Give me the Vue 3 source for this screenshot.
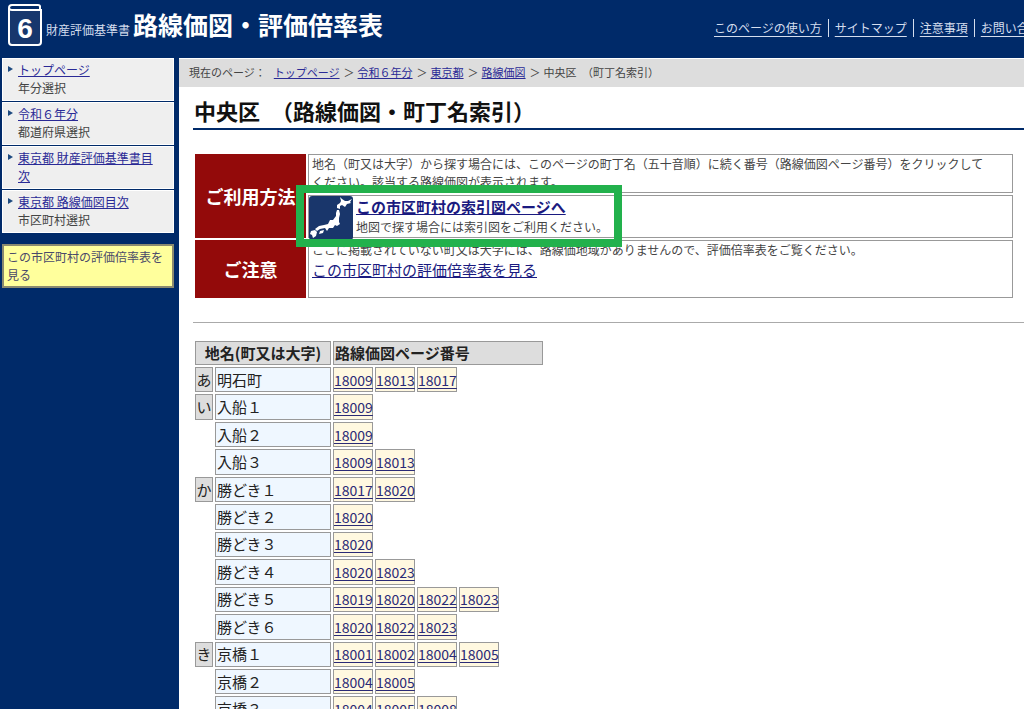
<script setup>
const help = ['このページの使い方', 'サイトマップ', '注意事項', 'お問い合わせ先']
const menu = [
  { link: 'トップページ', note: '年分選択' },
  { link: '令和６年分', note: '都道府県選択' },
  { link: '東京都 財産評価基準書目次', note: '' },
  { link: '東京都 路線価図目次', note: '市区町村選択' },
]
const crumbs = ['トップページ', '令和６年分', '東京都', '路線価図']
const towns = [
  { kana: 'あ', name: '明石町', pages: ['18009', '18013', '18017'] },
  { kana: 'い', name: '入船１', pages: ['18009'] },
  { kana: '', name: '入船２', pages: ['18009'] },
  { kana: '', name: '入船３', pages: ['18009', '18013'] },
  { kana: 'か', name: '勝どき１', pages: ['18017', '18020'] },
  { kana: '', name: '勝どき２', pages: ['18020'] },
  { kana: '', name: '勝どき３', pages: ['18020'] },
  { kana: '', name: '勝どき４', pages: ['18020', '18023'] },
  { kana: '', name: '勝どき５', pages: ['18019', '18020', '18022', '18023'] },
  { kana: '', name: '勝どき６', pages: ['18020', '18022', '18023'] },
  { kana: 'き', name: '京橋１', pages: ['18001', '18002', '18004', '18005'] },
  { kana: '', name: '京橋２', pages: ['18004', '18005'] },
  { kana: '', name: '京橋３', pages: ['18004', '18005', '18008'] },
]
</script>

<template>
  <div class="page">
    <header class="top">
      <svg class="book" viewBox="0 0 34 42" aria-hidden="true">
        <rect x="2" y="6" width="30" height="34" fill="#17376d" />
        <path d="M32 5.500V2.500Q32 1 30 1H4Q1 1 1 4V38Q1 41 4 41H30Q33 41 33 38V6H4Q1.500 6 1 4" fill="none" stroke="#fff" stroke-width="2" />
        <text x="17" y="34" text-anchor="middle" class="era">6</text>
      </svg>
      <p class="brand"><span class="series">財産評価基準書</span><strong class="title">路線価図・評価倍率表</strong></p>
      <nav class="help">
        <a v-for="h in help" :key="h" href="#">{{ h }}</a>
      </nav>
    </header>

    <div class="body">
      <aside class="side">
        <ul class="menu">
          <li v-for="m in menu" :key="m.link">
            <a href="#">{{ m.link }}</a>
            <span v-if="m.note">{{ m.note }}</span>
          </li>
        </ul>
        <a class="ratio" href="#">この市区町村の評価倍率表を見る</a>
      </aside>

      <main class="main">
        <div class="crumbs">
          <span class="label">現在のページ：</span>
          <template v-for="c in crumbs" :key="c"><a href="#">{{ c }}</a><span class="sep">＞</span></template>
          <span>中央区　（町丁名索引）</span>
        </div>

        <div class="content">
          <h1>中央区　（路線価図・町丁名索引）</h1>

          <div class="guide">
            <table class="notes">
              <tbody>
                <tr class="first">
                  <th rowspan="2" scope="rowgroup">ご利用方法</th>
                  <td>地名（町又は大字）から探す場合には、このページの町丁名（五十音順）に続く番号（路線価図ページ番号）をクリックして<br>ください。該当する路線価図が表示されます。</td>
                </tr>
                <tr class="second">
                  <td class="index">
                    <div class="map-row">
                      <svg class="map" viewBox="0 0 44 44" aria-hidden="true">
                        <rect width="44" height="44" rx="3" fill="#19366b" />
                        <path d="M31 1L33 3L36 5L39 5L43 3L41 6L42 7L38 8L36 11L33 9L31 10L31 13L28 12L28 9L31 7L32 5Z" fill="#fff" />
                        <path d="M28 14L30 14L31 18L30 22L30 26L31 28L28 30L26 29L24 32L20 32L18 35L16 32L11 33L8 35L6 33L10 30L15 29L19 28L21 24L24 24L27 20L27 17Z" fill="#fff" />
                        <path d="M11 35L15 34L14 37L10 38ZM2 35L6 34L8 36L7 40L4 42L3 39L1 38Z" fill="#fff" />
                      </svg>
                      <div>
                        <a class="strong" href="#">この市区町村の索引図ページへ</a>
                        <p>地図で探す場合には索引図をご利用ください。</p>
                      </div>
                    </div>
                  </td>
                </tr>
                <tr class="third">
                  <th scope="row">ご注意</th>
                  <td>
                    <p>ここに掲載されていない町又は大字には、路線価地域がありませんので、評価倍率表をご覧ください。</p>
                    <a class="see" href="#">この市区町村の評価倍率表を見る</a>
                  </td>
                </tr>
              </tbody>
            </table>
            <div class="marker"></div>
          </div>

          <hr>

          <table class="towns">
            <colgroup>
              <col class="c-kana"><col class="c-name"><col class="c-page"><col class="c-page"><col class="c-page"><col class="c-page"><col class="c-rest">
            </colgroup>
            <thead>
              <tr>
                <th colspan="2" scope="col" class="place">地名(町又は大字)</th>
                <th colspan="5" scope="col">路線価図ページ番号</th>
              </tr>
            </thead>
            <tbody>
              <tr v-for="t in towns" :key="t.name">
                <td :class="{ kana: t.kana }">{{ t.kana }}</td>
                <td class="name">{{ t.name }}</td>
                <td v-for="p in t.pages" :key="p" class="num"><a href="#">{{ p }}</a></td>
              </tr>
            </tbody>
          </table>
        </div>
      </main>
    </div>
  </div>
</template>

<style>
html { scrollbar-width: none; }
body { margin: 0; background: #002a69; }
</style>

<style scoped>
.page {
  min-height: 100vh;
  display: flex;
  flex-direction: column;
  font-family: "Noto Sans CJK JP", sans-serif;
  font-size: 12px;
  line-height: 18px;
  color: #444;
  background: #002a69;
}
p, ul, h1 { margin: 0; padding: 0; }
a { color: #2a2a96; }

.top {
  height: 58px;
  display: flex;
  align-items: flex-start;
  overflow: hidden;
  white-space: nowrap;
  color: #fff;
}
.book { width: 34px; height: 42px; margin: 4px 4px 0 8px; flex: none; }
.era { font: bold 28px "Liberation Sans", sans-serif; fill: #fff; }
.brand { display: flex; align-items: baseline; line-height: 36px; padding-top: 6px; flex: none; }
.series { color: #d5deee; margin-right: 3px; }
.title { font-size: 25px; }
.help { display: flex; margin-left: auto; width: 316px; padding-top: 19px; flex: none; }
.help a { color: #d5deee; padding: 0 6px; border-left: 1px solid #d5deee; flex: none; text-underline-offset: 3px; }
.help a:first-child { border-left: 0; }

.body { flex: 1; display: flex; }
.side { width: 172px; padding: 0 5px 0 2px; flex: none; }
.menu { list-style: none; display: flex; flex-direction: column; gap: 1px; }
.menu li {
  position: relative;
  box-sizing: border-box;
  min-height: 42px;
  padding: 2px 9px 3px 15px;
  border: 1px solid #fff;
  background: #efefef;
}
.menu li::before {
  content: "";
  position: absolute;
  left: 5px;
  top: 7px;
  border: 3px solid transparent;
  border-left: 5px solid #1d4a80;
  border-right: 0;
}
.menu span { display: block; }
.ratio {
  display: block;
  margin: 11px 0 0;
  padding: 2px 3px;
  border: 2px solid #8a8a70;
  background: #ffff9c;
  color: #4a4a6a;
  text-decoration: none;
}

.main { flex: 1; min-width: 0; background: #fff; }
.crumbs {
  display: flex;
  padding: 4px 10px 6px;
  border-top: 1px solid #fff;
  background: #ddd;
  font-size: 11px;
  white-space: nowrap;
}
.label { margin-right: 8px; }
.sep { margin: 0 3px 0 4px; }

.content { padding: 8px 0 0 14px; }
h1 {
  padding: 0 0 3px 1px;
  border-bottom: 2px solid #002a69;
  font-size: 22px;
  line-height: 30px;
  color: #111;
}
.guide { position: relative; margin: 22px 9px 0 0; }
.notes { width: 100%; border-spacing: 2px; table-layout: fixed; }
.notes th {
  width: 111px;
  padding: 0;
  background: #930a0a;
  color: #fff;
  font-size: 18px;
}
.notes td {
  padding: 0 3px;
  border: 1px solid #999;
  vertical-align: top;
  box-sizing: border-box;
}
.first td { height: 39px; }
.second td { height: 43px; }
.third td { height: 58px; }
.notes .index { padding: 0; }
.map-row { display: flex; height: 41px; gap: 3px; }
.map { width: 44px; height: 44px; flex: none; }
.strong, .see { display: block; font-size: 15px; line-height: 22px; color: #1a1a80; }
.strong { font-weight: bold; }
.marker {
  position: absolute;
  left: 103px;
  top: 33px;
  width: 310px;
  height: 46px;
  border: 8px solid #22b14c;
}
hr { margin: 22px 0 0; border: 0; border-top: 1px solid #aaa; }

.towns {
  width: 352px;
  height: 385px;
  margin-top: 16px;
  border-spacing: 2px;
  table-layout: fixed;
  font-size: 15px;
  line-height: 22px;
  color: #222;
}
.c-kana { width: 18px; }
.c-name { width: 116px; }
.c-page { width: 40px; }
.c-rest { width: 42px; }
.towns th, .towns td { padding: 0 1px; text-align: left; white-space: nowrap; }
.towns th { border: 1px solid #999; background: #ddd; }
.towns .place { text-align: center; }
.towns .kana { border: 1px solid #999; background: #ddd; padding: 0; text-align: center; }
.towns .name { border: 1px solid #999; background: #eff7ff; }
.towns .num { border: 1px solid #999; background: #fff8e0; padding: 0; text-align: center; font-size: 14px; }
.num a { text-underline-offset: 2px; color: #2a2a76; }
</style>
